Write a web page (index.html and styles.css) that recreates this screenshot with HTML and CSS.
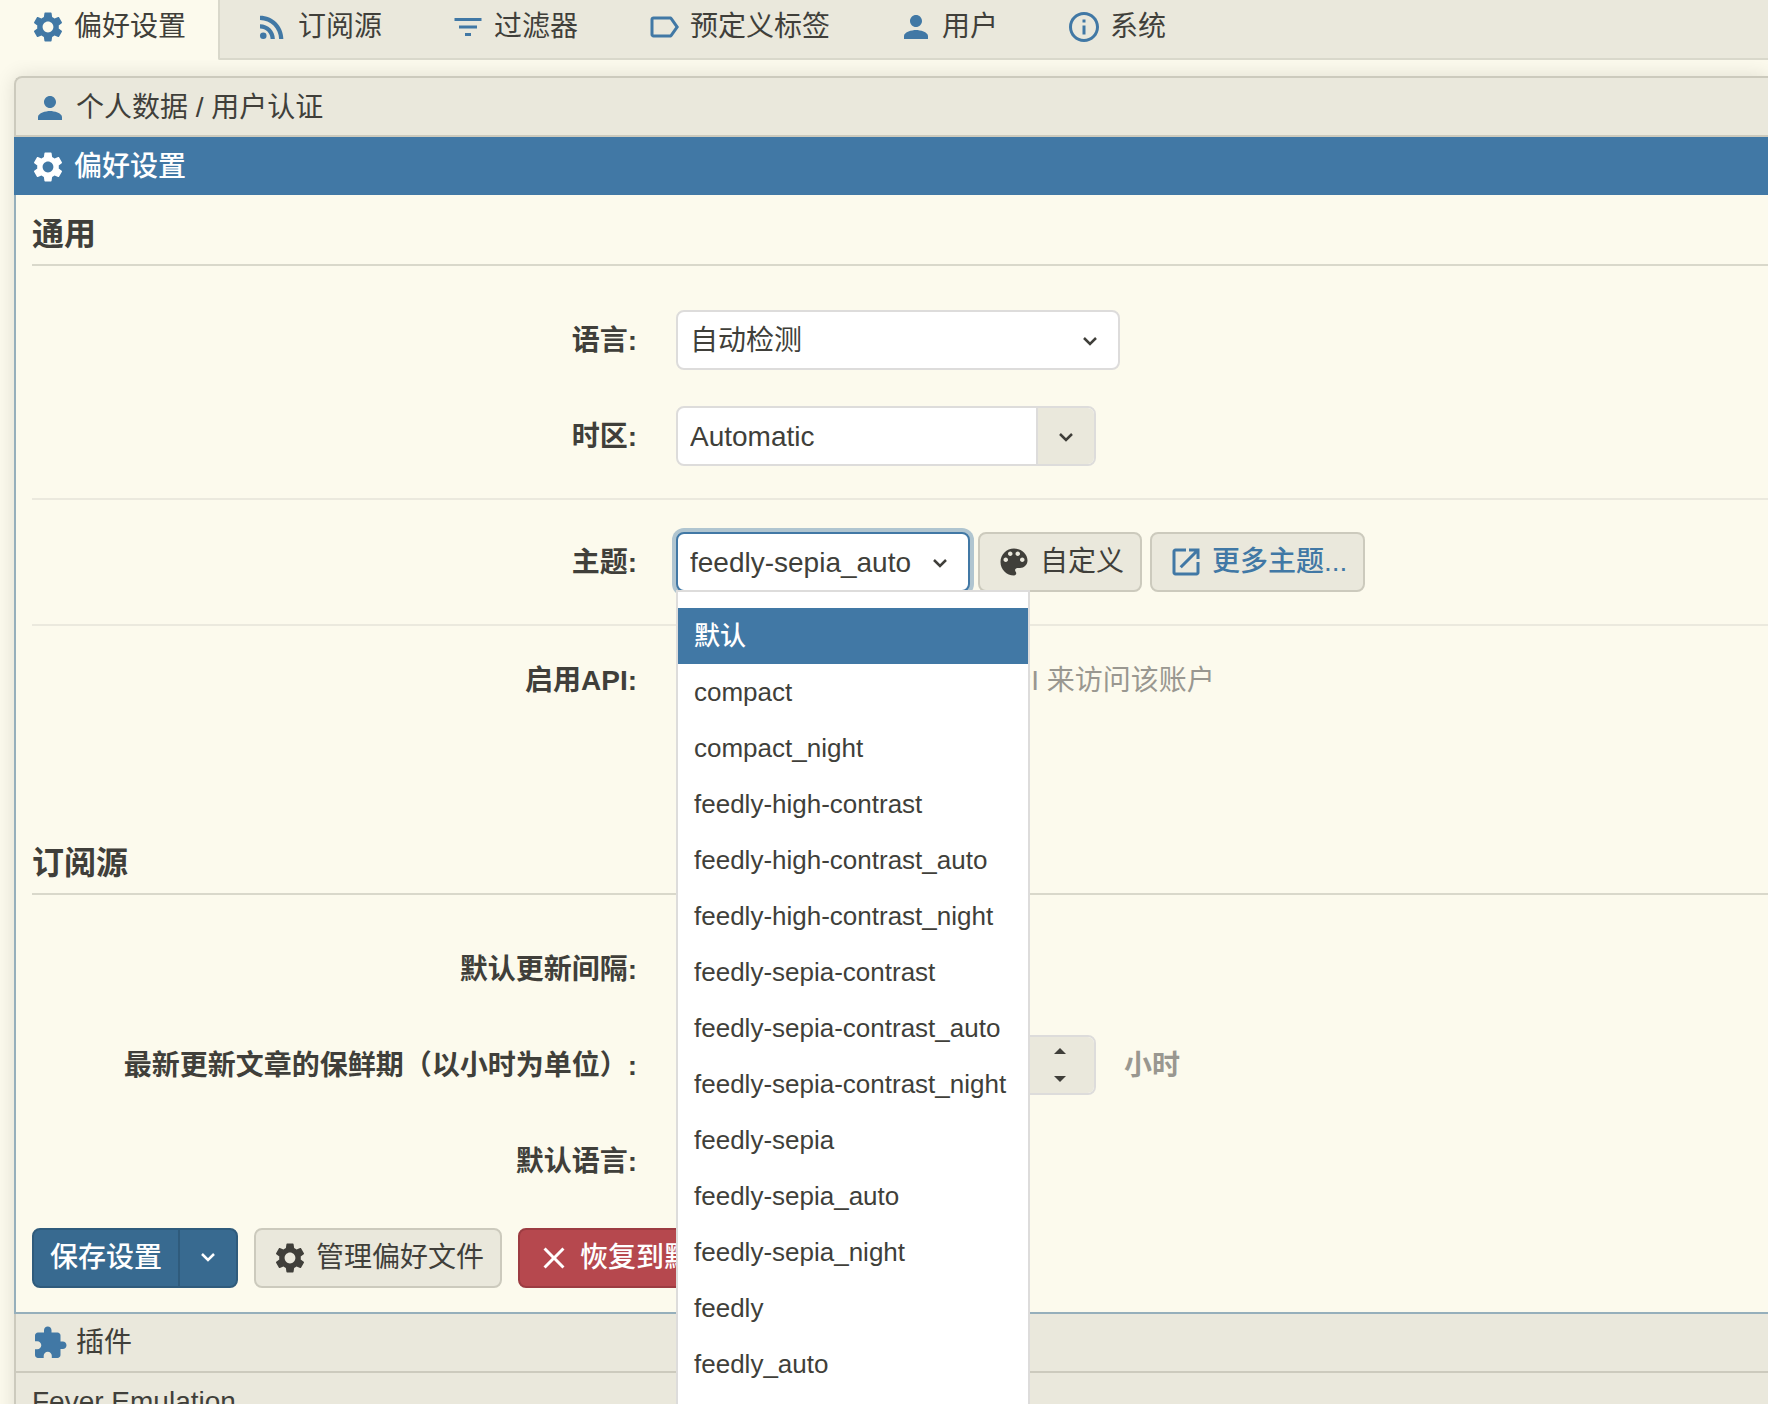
FILE: index.html
```html
<!DOCTYPE html>
<html lang="zh-CN">
<head>
<meta charset="utf-8">
<title>偏好设置</title>
<link rel="stylesheet" href="styles.css">
</head>
<body>
<svg class="sprite" aria-hidden="true">
  <symbol id="gear" viewBox="0 0 24 24"><path d="M19.14 12.94c.04-.3.06-.61.06-.94 0-.32-.02-.64-.07-.94l2.03-1.58c.18-.14.23-.41.12-.61l-1.92-3.32c-.12-.22-.37-.29-.59-.22l-2.39.96c-.5-.38-1.03-.7-1.62-.94L14.4 2.81c-.04-.24-.24-.41-.48-.41h-3.84c-.24 0-.43.17-.47.41L9.25 5.35c-.59.24-1.13.57-1.62.94l-2.39-.96c-.22-.08-.47 0-.59.22L2.74 8.87c-.12.21-.08.47.12.61l2.03 1.58c-.05.3-.09.63-.09.94s.02.64.07.94l-2.03 1.58c-.18.14-.23.41-.12.61l1.92 3.32c.12.22.37.29.59.22l2.39-.96c.5.38 1.03.7 1.62.94l.36 2.54c.05.24.24.41.48.41h3.84c.24 0 .44-.17.47-.41l.36-2.54c.59-.24 1.13-.56 1.62-.94l2.39.96c.22.08.47 0 .59-.22l1.92-3.32c.12-.22.07-.47-.12-.61l-2.01-1.58zM12 15.6c-1.98 0-3.6-1.62-3.6-3.6s1.62-3.6 3.6-3.6 3.6 1.62 3.6 3.6-1.62 3.6-3.6 3.6z"/></symbol>
  <symbol id="rss" viewBox="0 0 24 24"><circle cx="6.18" cy="17.82" r="2.18"/><path d="M4 4.44v2.83c7.03 0 12.73 5.7 12.73 12.73h2.83c0-8.59-6.97-15.56-15.56-15.56zm0 5.66v2.83c3.9 0 7.07 3.17 7.07 7.07h2.83c0-5.47-4.43-9.9-9.9-9.9z"/></symbol>
  <symbol id="filter" viewBox="0 0 24 24"><path d="M10 18h4v-2h-4v2zM3 6v2h18V6H3zm3 7h12v-2H6v2z"/></symbol>
  <symbol id="label" viewBox="0 0 24 24"><path d="M17.63 5.84C17.27 5.33 16.67 5 16 5L5 5.01C3.9 5.01 3 5.9 3 7v10c0 1.1.9 1.99 2 1.99L16 19c.67 0 1.27-.33 1.63-.84L22 12l-4.37-6.16zM16 17H5V7h11l3.55 5L16 17z"/></symbol>
  <symbol id="person" viewBox="0 0 24 24"><path d="M12 12c2.21 0 4-1.79 4-4s-1.79-4-4-4-4 1.79-4 4 1.79 4 4 4zm0 2c-2.67 0-8 1.34-8 4v2h16v-2c0-2.66-5.33-4-8-4z"/></symbol>
  <symbol id="info" viewBox="0 0 24 24"><path d="M11 7h2v2h-2zm0 4h2v6h-2zm1-9C6.48 2 2 6.48 2 12s4.48 10 10 10 10-4.48 10-10S17.52 2 12 2zm0 18c-4.41 0-8-3.59-8-8s3.59-8 8-8 8 3.59 8 8-3.59 8-8 8z"/></symbol>
  <symbol id="palette" viewBox="0 0 24 24"><path d="M12 3c-4.97 0-9 4.03-9 9s4.03 9 9 9c.83 0 1.5-.67 1.5-1.5 0-.39-.15-.74-.39-1.01-.23-.26-.38-.61-.38-.99 0-.83.67-1.5 1.5-1.5H16c2.76 0 5-2.24 5-5 0-4.42-4.03-8-9-8zm-5.5 9c-.83 0-1.5-.67-1.5-1.5S5.67 9 6.5 9 8 9.67 8 10.500 7.330 12 6.500 12zm3-4C8.670 8 8 7.330 8 6.500S8.670 5 9.500 5s1.500.67 1.500 1.500S10.330 8 9.500 8zm5 0c-.83 0-1.500-.67-1.500-1.500S13.670 5 14.500 5s1.500.67 1.500 1.500S15.330 8 14.500 8zm3 4c-.83 0-1.500-.67-1.500-1.500S16.670 9 17.500 9s1.500.67 1.500 1.500-.67 1.500-1.500 1.500z"/></symbol>
  <symbol id="open" viewBox="0 0 24 24"><path d="M19 19H5V5h7V3H5c-1.110 0-2 .9-2 2v14c0 1.100.89 2 2 2h14c1.100 0 2-.9 2-2v-7h-2v7zM14 3v2h3.590l-9.830 9.830 1.410 1.410L19 6.410V10h2V3h-7z"/></symbol>
  <symbol id="close" viewBox="0 0 24 24"><path d="M19 6.410L17.590 5 12 10.590 6.410 5 5 6.410 10.590 12 5 17.590 6.410 19 12 13.410 17.590 19 19 17.590 13.410 12z"/></symbol>
  <symbol id="puzzle" viewBox="0 0 24 24"><path d="M20.500 11H19V7c0-1.100-.9-2-2-2h-4V3.500C13 2.120 11.880 1 10.500 1S8 2.120 8 3.500V5H4c-1.100 0-1.990.9-1.990 2v3.800H3.500c1.490 0 2.700 1.210 2.700 2.700s-1.210 2.700-2.700 2.700H2V20c0 1.100.9 2 2 2h3.800v-1.500c0-1.490 1.210-2.700 2.700-2.700 1.490 0 2.700 1.210 2.700 2.700V22H17c1.100 0 2-.9 2-2v-4h1.500c1.380 0 2.500-1.120 2.500-2.500S21.880 11 20.500 11z"/></symbol>
  <symbol id="chevron" viewBox="0 0 16 10"><path d="M2 1l6 6 6-6" fill="none" stroke="currentColor" stroke-width="2.500"/></symbol>
</svg>

<nav class="tabs">
  <button class="tab tab-active" type="button"><svg class="icon accent"><use href="#gear"/></svg>偏好设置</button>
  <button class="tab" type="button"><svg class="icon accent"><use href="#rss"/></svg>订阅源</button>
  <button class="tab" type="button"><svg class="icon accent"><use href="#filter"/></svg>过滤器</button>
  <button class="tab" type="button"><svg class="icon accent"><use href="#label"/></svg>预定义标签</button>
  <button class="tab" type="button"><svg class="icon accent"><use href="#person"/></svg>用户</button>
  <button class="tab" type="button"><svg class="icon accent"><use href="#info"/></svg>系统</button>
  <div class="tabs-rest"></div>
</nav>

<main class="accordion">
  <button class="title title-first" type="button"><svg class="icon accent"><use href="#person"/></svg>个人数据 / 用户认证</button>
  <button class="title title-selected" type="button"><svg class="icon"><use href="#gear"/></svg>偏好设置</button>
  <form class="pane">
    <h2 class="heading">通用</h2>
    <div class="row">
      <label class="row-label" for="lang">语言:</label>
      <div class="select select-wide">
        <select id="lang"><option>自动检测</option></select>
        <svg class="chevron"><use href="#chevron"/></svg>
      </div>
    </div>
    <div class="row">
      <label class="row-label" for="tz">时区:</label>
      <div class="combo">
        <input id="tz" type="text" value="Automatic">
        <button class="combo-arrow" type="button" aria-label="时区"><svg class="chevron"><use href="#chevron"/></svg></button>
      </div>
    </div>
    <hr class="rule">
    <div class="row">
      <label class="row-label" for="theme">主题:</label>
      <div class="controls">
        <div class="select select-open">
          <select id="theme"><option>feedly-sepia_auto</option></select>
          <svg class="chevron"><use href="#chevron"/></svg>
          <ul class="menu" role="listbox" aria-label="主题">
            <li class="menu-item menu-item-active" role="option">默认</li>
            <li class="menu-item" role="option">compact</li>
            <li class="menu-item" role="option">compact_night</li>
            <li class="menu-item" role="option">feedly-high-contrast</li>
            <li class="menu-item" role="option">feedly-high-contrast_auto</li>
            <li class="menu-item" role="option">feedly-high-contrast_night</li>
            <li class="menu-item" role="option">feedly-sepia-contrast</li>
            <li class="menu-item" role="option">feedly-sepia-contrast_auto</li>
            <li class="menu-item" role="option">feedly-sepia-contrast_night</li>
            <li class="menu-item" role="option">feedly-sepia</li>
            <li class="menu-item" role="option">feedly-sepia_auto</li>
            <li class="menu-item" role="option">feedly-sepia_night</li>
            <li class="menu-item" role="option">feedly</li>
            <li class="menu-item" role="option">feedly_auto</li>
          </ul>
        </div>
        <button class="button" type="button"><svg class="icon"><use href="#palette"/></svg>自定义</button>
        <button class="button button-link" type="button"><svg class="icon"><use href="#open"/></svg>更多主题...</button>
      </div>
    </div>
    <hr class="rule">
    <div class="row row-api">
      <label class="row-label" for="api">启用API:</label>
      <div class="controls controls-note">
        <input class="check" id="api" type="checkbox">
        <label class="note" for="api">允许第三方应用通过 API 来访问该账户</label>
      </div>
    </div>

    <h2 class="heading heading-next">订阅源</h2>
    <div class="row">
      <label class="row-label" for="interval">默认更新间隔:</label>
      <div class="select select-short">
        <select id="interval"><option></option></select>
      </div>
    </div>
    <div class="row">
      <label class="row-label" for="fresh">最新更新文章的保鲜期（以小时为单位）:</label>
      <div class="controls controls-note">
        <div class="combo">
          <input id="fresh" type="text" value="24">
          <div class="spin">
            <button class="spin-button" type="button" aria-label="增加"><span class="up"></span></button>
            <button class="spin-button" type="button" aria-label="减少"><span class="down"></span></button>
          </div>
        </div>
        <label class="note note-bold" for="fresh">小时</label>
      </div>
    </div>
    <div class="row">
      <label class="row-label" for="feedlang">默认语言:</label>
      <div class="select select-short">
        <select id="feedlang"><option></option></select>
      </div>
    </div>

    <div class="actions">
      <div class="split">
        <button class="split-main" type="submit">保存设置</button>
        <button class="split-arrow" type="button" aria-label="更多"><svg class="chevron"><use href="#chevron"/></svg></button>
      </div>
      <button class="button" type="button"><svg class="icon"><use href="#gear"/></svg>管理偏好文件</button>
      <button class="button button-danger" type="button"><svg class="icon"><use href="#close"/></svg>恢复到默认</button>
    </div>
  </form>
  <button class="title" type="button"><svg class="icon accent"><use href="#puzzle"/></svg>插件</button>
  <button class="title" type="button">Fever Emulation</button>
</main>
</body>
</html>
```

FILE: styles.css
```css
* { box-sizing: border-box; }

:root {
  --page: #fcfaed;
  --bar: #eae8dc;
  --text: #403f3a;
  --accent: #4178a5;
  --line: #d9d8cb;
  --edge: #cccabd;
  --field-line: #dddcdb;
}

body {
  margin: 0;
  height: 100vh;
  overflow: hidden;
  background: var(--page);
  color: var(--text);
}

body, button, input, select {
  font-family: "Liberation Sans", "Noto Sans CJK SC", sans-serif;
  font-size: 28px;
  line-height: 36px;
}

button, input, select { color: inherit; margin: 0; }
button { border: 0; background: none; padding: 0; }

.sprite { display: none; }
.icon { width: 36px; height: 36px; flex: none; fill: currentColor; }
.accent { color: var(--accent); }
.chevron { width: 16px; height: 10px; flex: none; }

.tabs { display: flex; }
.tab {
  display: flex;
  align-items: center;
  gap: 8px;
  height: 60px;
  padding: 0 34px 4px;
  background: var(--bar);
  border-bottom: 2px solid var(--line);
  white-space: nowrap;
}
.tab-active {
  padding: 0 32px 4px 30px;
  background: var(--page);
  border-bottom-color: var(--page);
}
.tab-active + .tab {
  border-left: 2px solid var(--line);
  border-bottom-left-radius: 2px;
}
.tabs-rest { flex: 1; background: var(--bar); border-bottom: 2px solid var(--line); }

.accordion {
  margin: 16px 0 0 14px;
  border-top-left-radius: 8px;
  box-shadow: 0 0 20px rgba(0, 0, 0, .12);
}
.title {
  display: flex;
  align-items: center;
  gap: 8px;
  width: 100%;
  height: 59px;
  padding: 0 16px;
  background: var(--bar);
  border-left: 2px solid var(--edge);
  border-bottom: 2px solid var(--edge);
}
.title-first {
  height: 61px;
  padding-top: 2px;
  border-top: 2px solid var(--edge);
  border-top-left-radius: 8px;
}
.title-selected {
  height: 58px;
  padding: 4px 14px 0;
  background: var(--accent);
  border-color: var(--accent);
  color: #fff;
  font-weight: 500;
}

.pane {
  display: block;
  padding: 21px 0 24px 16px;
  background: var(--page);
  border-left: 2px solid #96afbb;
  border-bottom: 2px solid #96afbb;
}
.heading {
  margin: 0 0 44px;
  padding-bottom: 12px;
  border-bottom: 2px solid var(--line);
  font-size: 32px;
  line-height: 36px;
}
.heading-next { margin-top: 135px; }
.row {
  display: grid;
  grid-template-columns: 605px 1fr;
  column-gap: 39px;
  align-items: center;
  min-height: 60px;
}
.row + .row { margin-top: 36px; }
.row-label { padding-top: 2px; font-weight: bold; text-align: right; white-space: nowrap; }
.row-api { margin-top: -8px; }
.rule { margin: 32px 0; border: 0; border-top: 2px solid #ebe9de; }

.controls { display: flex; align-items: center; gap: 8px; }
.controls-note { gap: 28px; }

.select { display: grid; align-items: center; position: relative; }
.select select {
  grid-area: 1 / 1;
  width: 100%;
  height: 60px;
  padding: 2px 12px 0;
  appearance: none;
  background: #fff;
  border: 2px solid var(--field-line);
  border-radius: 8px;
  outline: 0;
}
.select .chevron { grid-area: 1 / 1; justify-self: end; margin: 4px 22px 0 0; }
.select-wide { width: 444px; }
.select-open { width: 294px; }
.select-short { width: 320px; }
.select-open select { border-color: var(--accent); box-shadow: 0 0 0 4px #b0c5d0; }

.combo {
  display: flex;
  width: 420px;
  height: 60px;
  background: #fff;
  border: 2px solid var(--field-line);
  border-radius: 8px;
  overflow: hidden;
}
.combo input { flex: 1; min-width: 0; padding: 2px 12px 0; border: 0; background: none; outline: 0; }
.combo-arrow {
  display: grid;
  place-items: center;
  width: 58px;
  padding-top: 4px;
  background: var(--bar);
  border-left: 2px solid var(--field-line);
}
.spin { display: flex; flex-direction: column; width: 70px; background: var(--bar); border-left: 2px solid var(--field-line); }
.spin-button { flex: 1; display: grid; place-items: center; }
.up, .down { border: 6px solid transparent; }
.up { border-top: 0; border-bottom-color: var(--text); }
.down { border-bottom: 0; border-top-color: var(--text); }

.check { width: 30px; height: 30px; }
.note { padding-top: 2px; color: #999790; white-space: nowrap; }
.note-bold { font-weight: bold; }

.menu {
  position: absolute;
  z-index: 2;
  top: 58px;
  left: 0;
  width: 354px;
  margin: 0;
  padding: 16px 0;
  list-style: none;
  background: #fff;
  border: 2px solid var(--field-line);
  font-size: 26px;
}
.menu-item { padding: 10px 16px; white-space: nowrap; }
.menu-item-active { background: var(--accent); color: #fff; font-weight: 500; }

.button {
  display: flex;
  align-items: center;
  gap: 8px;
  height: 60px;
  padding: 0 16px;
  background: var(--bar);
  border: 2px solid var(--edge);
  border-radius: 8px;
  white-space: nowrap;
}
.button-link { color: var(--accent); font-weight: 500; }
.button-danger { background: #b6484e; border-color: #9c3c42; color: #fff; font-weight: 500; }

.actions { display: flex; gap: 16px; margin-top: 37px; }
.split {
  display: flex;
  height: 60px;
  background: #386a90;
  border: 2px solid #2f5b7c;
  border-radius: 8px;
  color: #fff;
}
.split-main { padding: 0 16px; font-weight: 500; }
.split-arrow { display: grid; place-items: center; width: 58px; border-left: 2px solid #2f5b7c; }
```
